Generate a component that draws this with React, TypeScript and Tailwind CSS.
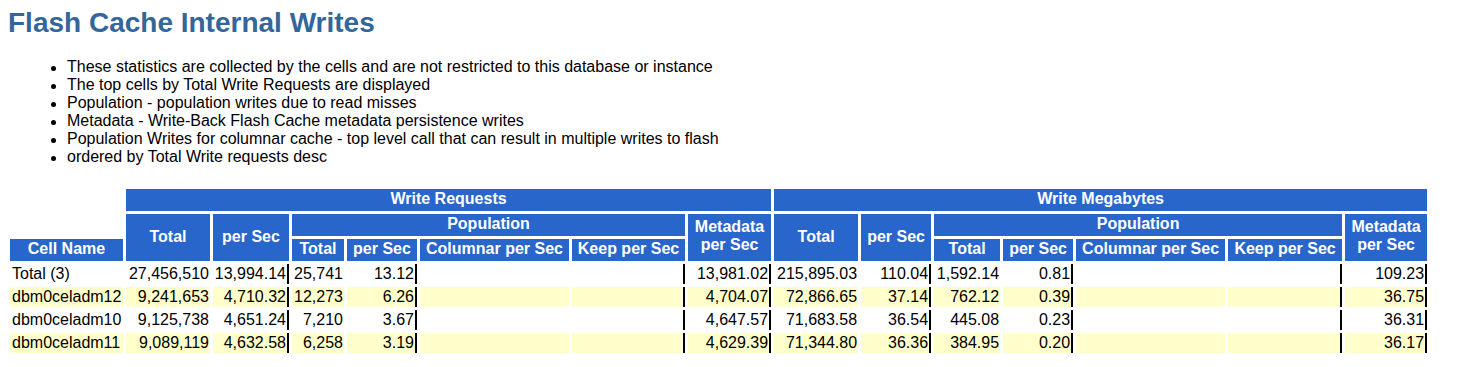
import React from "react";

type Row = {
  name: string;
  reqTotal: string;
  reqSec: string;
  popTotal: string;
  popSec: string;
  metaSec: string;
  mbTotal: string;
  mbSec: string;
  mbPopTotal: string;
  mbPopSec: string;
  mbMetaSec: string;
};

const notes = [
  "These statistics are collected by the cells and are not restricted to this database or instance",
  "The top cells by Total Write Requests are displayed",
  "Population - population writes due to read misses",
  "Metadata - Write-Back Flash Cache metadata persistence writes",
  "Population Writes for columnar cache - top level call that can result in multiple writes to flash",
  "ordered by Total Write requests desc",
];

const rows: Row[] = [
  {
    name: "Total (3)",
    reqTotal: "27,456,510",
    reqSec: "13,994.14",
    popTotal: "25,741",
    popSec: "13.12",
    metaSec: "13,981.02",
    mbTotal: "215,895.03",
    mbSec: "110.04",
    mbPopTotal: "1,592.14",
    mbPopSec: "0.81",
    mbMetaSec: "109.23",
  },
  {
    name: "dbm0celadm12",
    reqTotal: "9,241,653",
    reqSec: "4,710.32",
    popTotal: "12,273",
    popSec: "6.26",
    metaSec: "4,704.07",
    mbTotal: "72,866.65",
    mbSec: "37.14",
    mbPopTotal: "762.12",
    mbPopSec: "0.39",
    mbMetaSec: "36.75",
  },
  {
    name: "dbm0celadm10",
    reqTotal: "9,125,738",
    reqSec: "4,651.24",
    popTotal: "7,210",
    popSec: "3.67",
    metaSec: "4,647.57",
    mbTotal: "71,683.58",
    mbSec: "36.54",
    mbPopTotal: "445.08",
    mbPopSec: "0.23",
    mbMetaSec: "36.31",
  },
  {
    name: "dbm0celadm11",
    reqTotal: "9,089,119",
    reqSec: "4,632.58",
    popTotal: "6,258",
    popSec: "3.19",
    metaSec: "4,629.39",
    mbTotal: "71,344.80",
    mbSec: "36.36",
    mbPopTotal: "384.95",
    mbPopSec: "0.20",
    mbMetaSec: "36.17",
  },
];

const colWidths = [113, 84, 76, 52, 70, 149, 113, 83, 84, 70, 66, 70, 149, 114, 82];

const th = "bg-[#2866cc] text-white font-bold text-center align-middle px-0 pt-0 pb-[2px] leading-[18px]";
const thMeta = "bg-[#2866cc] text-white font-bold text-center align-middle px-0 pt-0 pb-[3px] leading-[18px]";
const td = "text-right align-middle pr-[1px] pl-[1px] py-0 leading-[18px] whitespace-nowrap";
const edge = "border-r-2 border-black";

export default function App() {
  return (
    <div className="min-h-screen bg-white px-[8px] pt-[7px] font-['Liberation_Sans',Arial,sans-serif] text-black">
      <h1 className="text-[28px] leading-[32px] font-bold text-[#336699]">
        Flash Cache Internal Writes
      </h1>

      {/* Notes list */}
      <ul className="mt-[19px] ml-[43px] text-[16px] leading-[18px]">
        {notes.map((note) => (
          <li key={note} className="flex items-start">
            <span className="mt-[8px] mr-[11px] h-[5px] w-[5px] shrink-0 rounded-full bg-black"></span>
            <span>{note}</span>
          </li>
        ))}
      </ul>

      <table
        className="mt-[20px] -ml-[1px] table-fixed border-separate border-spacing-[3px] text-[16px]"
        style={{ width: 1423 }}
      >
        <colgroup>
          {colWidths.map((w, i) => (
            <col key={i} style={{ width: w }} />
          ))}
        </colgroup>
        <thead>
          <tr className="h-[22px]">
            <th className="p-0"></th>
            <th colSpan={7} className={th}>
              Write Requests
            </th>
            <th colSpan={7} className={th}>
              Write Megabytes
            </th>
          </tr>
          <tr className="h-[22px]">
            <th className="p-0"></th>
            <th rowSpan={2} className={th}>Total</th>
            <th rowSpan={2} className={th}>per Sec</th>
            <th colSpan={4} className={th}>Population</th>
            <th rowSpan={2} className={thMeta}>
              Metadata
              <br />
              per Sec
            </th>
            <th rowSpan={2} className={th}>Total</th>
            <th rowSpan={2} className={th}>per Sec</th>
            <th colSpan={4} className={th}>Population</th>
            <th rowSpan={2} className={thMeta}>
              Metadata
              <br />
              per Sec
            </th>
          </tr>
          <tr className="h-[22px]">
            <th className={th}>Cell Name</th>
            <th className={th}>Total</th>
            <th className={th}>per Sec</th>
            <th className={`${th} whitespace-nowrap`}>Columnar per Sec</th>
            <th className={`${th} whitespace-nowrap`}>Keep per Sec</th>
            <th className={th}>Total</th>
            <th className={th}>per Sec</th>
            <th className={`${th} whitespace-nowrap`}>Columnar per Sec</th>
            <th className={`${th} whitespace-nowrap`}>Keep per Sec</th>
          </tr>
        </thead>
        <tbody>
          {rows.map((r, i) => {
            const bg = i % 2 === 1 ? "bg-[#ffffcc]" : "bg-white";
            return (
              <tr key={r.name} className="h-[20px]">
                <td className={`${bg} text-left align-middle pl-[2px] py-0 leading-[18px] whitespace-nowrap`}>
                  {r.name}
                </td>
                <td className={`${bg} ${td}`}>{r.reqTotal}</td>
                <td className={`${bg} ${td} ${edge}`}>{r.reqSec}</td>
                <td className={`${bg} ${td}`}>{r.popTotal}</td>
                <td className={`${bg} ${td} ${edge}`}>{r.popSec}</td>
                <td className={`${bg} ${td}`}></td>
                <td className={`${bg} ${td} ${edge}`}></td>
                <td className={`${bg} ${td} ${edge}`}>{r.metaSec}</td>
                <td className={`${bg} ${td}`}>{r.mbTotal}</td>
                <td className={`${bg} ${td} ${edge}`}>{r.mbSec}</td>
                <td className={`${bg} ${td}`}>{r.mbPopTotal}</td>
                <td className={`${bg} ${td} ${edge}`}>{r.mbPopSec}</td>
                <td className={`${bg} ${td}`}></td>
                <td className={`${bg} ${td} ${edge}`}></td>
                <td className={`${bg} ${td} ${edge}`}>{r.mbMetaSec}</td>
              </tr>
            );
          })}
        </tbody>
      </table>
    </div>
  );
}
